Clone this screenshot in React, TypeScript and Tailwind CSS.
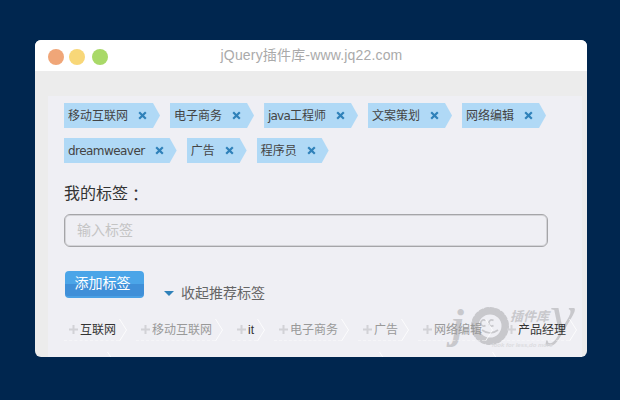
const FONT = "font-['Liberation_Sans','Noto_Sans_CJK_SC',sans-serif]";

const MY_TAGS = ['移动互联网', '电子商务', 'java工程师', '文案策划', '网络编辑', 'dreamweaver', '广告', '程序员'];

const SUGGESTED = [
  { label: '互联网', dark: true },
  { label: '移动互联网' },
  { label: 'it', dark: true },
  { label: '电子商务' },
  { label: '广告' },
  { label: '网络编辑' },
  { label: '产品经理', dark: true },
];

function Chevron() {
  return (
    <svg width="8" height="22" viewBox="0 0 8 22" className="shrink-0 block">
      <polyline points="0.5,0 7.5,11 0.5,22" fill="none" stroke="#ffffff" strokeWidth="1" opacity="0.8" />
    </svg>
  );
}

function Tag({ label }: { label: string }) {
  // latin part runs a bit narrower than DejaVu's default spacing
  const latin = label.match(/^[a-z]+/)?.[0] ?? '';
  const rest = label.slice(latin.length);
  return (
    <div className="h-[25px] flex items-center pl-1 pr-[13px] bg-[#b0d9f6] [clip-path:polygon(0_0,calc(100%-7px)_0,100%_50%,calc(100%-7px)_100%,0_100%)]">
      <span className="text-[12px] text-[#444] font-['DejaVu_Sans','Noto_Sans_CJK_SC',sans-serif]">
        {latin && <span className={latin.length < 5 ? 'tracking-[-0.8px]' : 'tracking-[-0.55px]'}>{latin}</span>}
        {rest}
      </span>
      <svg width="9" height="9" viewBox="0 0 9 9" className="ml-[10px] shrink-0">
        <path d="M1.2 1.2L7.8 7.8M7.8 1.2L1.2 7.8" stroke="#2f81b9" strokeWidth="2.2" />
      </svg>
    </div>
  );
}

function Suggested({ label, dark }: { label: string; dark?: boolean }) {
  return (
    <div className="flex items-center h-[22px] mr-[9px]">
      <div className="flex items-center h-full pl-[5px] pr-[3px] border-b border-dashed border-white/40">
        <svg width="9" height="9" viewBox="0 0 9 9" className="mr-[2px] shrink-0">
          <path d="M4.5 0V9M0 4.5H9" stroke="#d2d2d6" strokeWidth="2" />
        </svg>
        <span className={`text-[12px] ${dark ? 'text-[#333]' : 'text-[#999]'}`}>{label}</span>
      </div>
      <Chevron />
    </div>
  );
}

function Watermark() {
  return (
    <div className="absolute left-[415px] top-[266px] w-[130px] h-[50px] pointer-events-none text-[#c8c8cc]">
      <span className="absolute left-[2px] top-[-3px] text-[42px] leading-none italic font-bold font-['Liberation_Serif',serif]">j</span>
      <svg width="44" height="40" viewBox="0 0 44 40" className="absolute left-[18px] top-0">
        <circle cx="22" cy="20" r="14.5" fill="none" stroke="#c8c8cc" strokeWidth="6" />
        <circle cx="22" cy="20" r="17.5" fill="none" stroke="#c8c8cc" strokeWidth="3" strokeDasharray="3 2.5" strokeLinecap="round" />
        <path d="M17.5 14.5a3 3 0 1 0 0 5M25.5 14.5a3 3 0 1 0 0 5" fill="none" stroke="#c8c8cc" strokeWidth="1.6" />
        <path d="M14 24q8 6 16 0" fill="none" stroke="#c8c8cc" strokeWidth="1.6" />
      </svg>
      <span className="absolute left-[60px] top-[4px] text-[13px] leading-none italic font-bold">插件库</span>
      <span className="absolute left-[100px] top-[-19px] text-[56px] leading-none italic font-['Liberation_Serif',serif]">y</span>
      <span className="absolute left-[42px] top-[36px] text-[6px] leading-none italic font-bold text-[#dcdce0]">look for less,do more</span>
    </div>
  );
}

export default function App() {
  return (
    <div className={`w-[620px] h-[400px] bg-[#00264f] pt-10 pl-[35px] ${FONT}`}>
      <div className="relative w-[552px] h-[317px] rounded-md overflow-hidden bg-[#ececec] flex flex-col">
        {/* title bar */}
        <div className="relative h-[31px] bg-white flex items-center justify-center shrink-0">
          <div className="absolute left-[13px] top-[9px] flex">
            <span className="w-4 h-4 rounded-full bg-[#f0a678]" />
            <span className="w-4 h-4 rounded-full bg-[#f8d778] ml-[5px]" />
            <span className="w-4 h-4 rounded-full bg-[#a9d968] ml-[7px]" />
          </div>
          <span className="text-[14px] tracking-[0.17px] text-[#aaa] ml-[1px]">jQuery插件库-www.jq22.com</span>
        </div>

        {/* body */}
        <div className="flex-1 mt-[25px] ml-[13px] mr-[5px] bg-[#efeff4] pl-4 pt-[7px] overflow-hidden">
          <div className="flex flex-wrap gap-x-[10px] gap-y-[10px] w-[500px]">
            {MY_TAGS.map(t => <Tag key={t} label={t} />)}
          </div>

          <div className="mt-[21px] h-5 flex items-center text-[16px] text-[#333]">
            我的标签<span className="font-['Noto_Sans_CJK_TC',sans-serif]">：</span>
          </div>

          <div className="mt-[10px] w-[484px] h-[33px] rounded-md border border-[#a5a5a8] shadow-[inset_0_0_0_1px_#d4d4d8] flex items-center pl-3 text-[14px] text-[#c4c4c4]">
            输入标签
          </div>

          <div className="mt-6 flex items-end">
            <button className="ml-px w-[79px] h-[27px] rounded-[4px] pr-1 text-white text-[14px] bg-[linear-gradient(#4ba5e8_0%,#4ba5e8_50%,#3f8fd8_50%,#3f8fd8_100%)] border-b-2 border-[#4aa0e4]">
              添加标签
            </button>
            <div className="ml-5 flex items-center h-5 -mb-[5px]">
              <span className="w-0 h-0 border-x-[5px] border-x-transparent border-t-[5px] border-t-[#2f81b9]" />
              <span className="ml-[7px] text-[14px] text-[#666]">收起推荐标签</span>
            </div>
          </div>

          <div className="relative z-10 mt-[21px] flex flex-wrap gap-y-[11px] w-[530px]">
            {SUGGESTED.map(s => <Suggested key={s.label} label={s.label} dark={s.dark} />)}
          </div>
          <div className="mt-[11px] flex">
            <div className="ml-[43px]"><Chevron /></div>
            <div className="ml-[264px]"><Chevron /></div>
            <div className="ml-[105px]"><Chevron /></div>
          </div>
        </div>

        <Watermark />
      </div>
    </div>
  );
}
